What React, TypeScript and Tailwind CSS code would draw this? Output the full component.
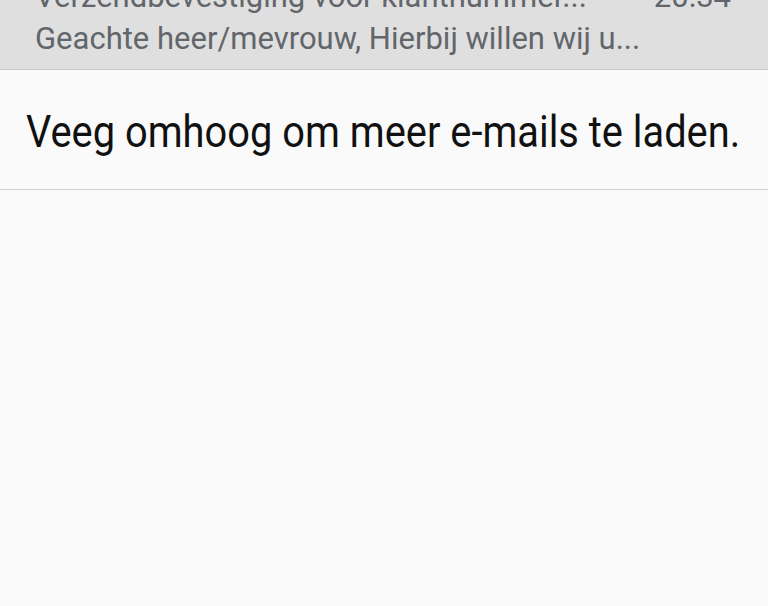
import React from 'react'

const font = { fontFamily: 'Roboto, "Noto Sans", sans-serif' }

export default function App() {
  return (
    <div className="h-[606px] w-[768px] overflow-hidden bg-[#fafafa]" style={font}>
      <div className="h-[70px] overflow-hidden border-b border-[#c9c9c9] bg-[#dfdfdf] pl-[35px] pr-[35px] text-[31px] leading-[42px] text-[#62666b]">
        <div className="mt-[-24px] flex justify-between">
          <span className="whitespace-nowrap">Verzendbevestiging voor klantnummer...</span>
          <span className="pr-[2px]">20:34</span>
        </div>
        <div className="whitespace-nowrap">Geachte heer/mevrouw, Hierbij willen wij u...</div>
      </div>
      <div className="flex h-[120px] items-center border-b border-[#d0d0d0] pl-[26px] pt-[3px]">
        <span className="origin-left scale-x-[0.885] whitespace-nowrap text-[45px] leading-none text-[#111]">
          Veeg omhoog om meer e-mails te laden.
        </span>
      </div>
    </div>
  )
}
